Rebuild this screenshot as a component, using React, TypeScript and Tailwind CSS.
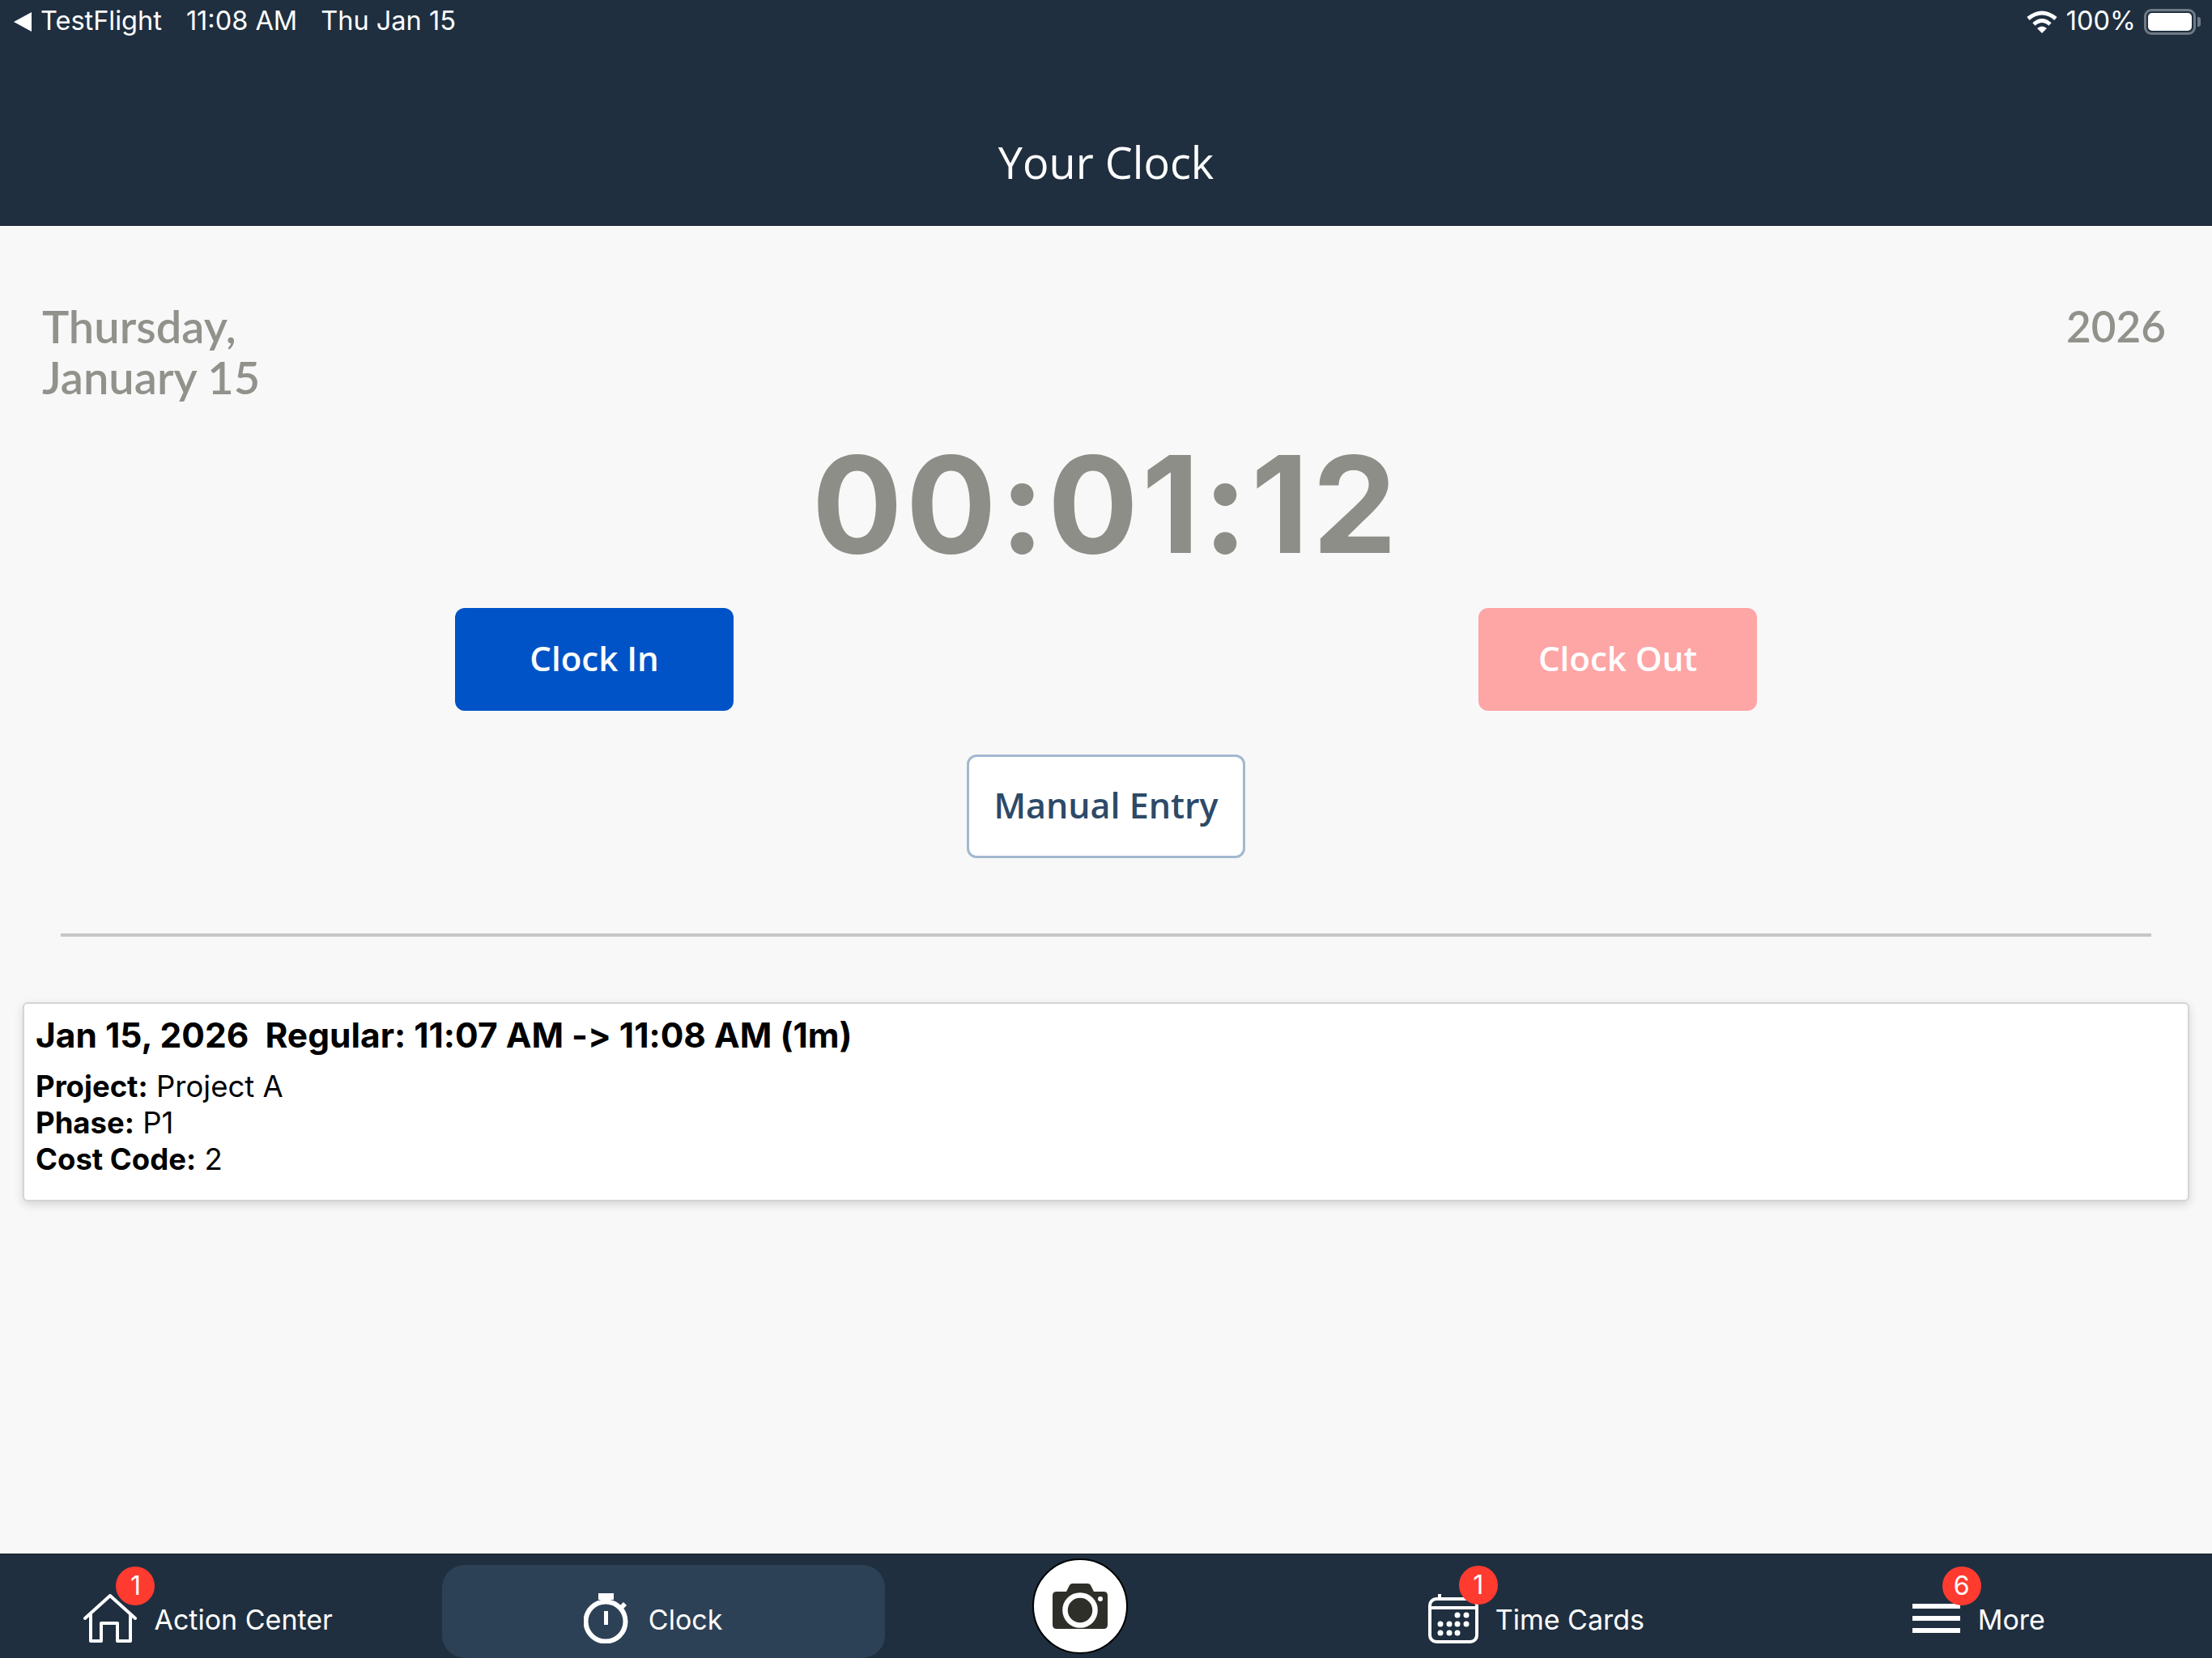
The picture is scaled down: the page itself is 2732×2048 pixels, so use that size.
function Badge({ n, pos }: { n: string; pos: string }) {
  return (
    <span className={`absolute ${pos} flex h-[48px] w-[48px] items-center justify-center rounded-full bg-[#ff3b30] font-['Inter',sans-serif] text-[32px] leading-none text-white`}>
      {n}
    </span>
  );
}

function HomeIcon() {
  return (
    <svg width="66" height="60" viewBox="0 0 66 60" fill="none" stroke="white" strokeWidth="4" strokeLinejoin="round" strokeLinecap="round">
      <path d="M2 30 L33 2 L64 30 M9 25 V58 H22 V36 H42 V58 H58 V25" />
    </svg>
  );
}

function WatchIcon() {
  return (
    <svg width="56" height="62" viewBox="0 0 56 62" fill="white">
      <rect x="18" y="0" width="19" height="8" />
      <circle cx="27" cy="35" r="24.5" fill="none" stroke="white" strokeWidth="6" />
      <rect x="25" y="22" width="5" height="17" />
      <path d="M44 16 L49 11 L53 15 L48 20 Z" />
    </svg>
  );
}

function CalendarIcon() {
  const dots: [number, number][] = [
    [36, 27], [47, 27],
    [15, 38], [26, 38], [36, 38], [47, 38],
    [15, 49], [26, 49], [36, 49],
  ];
  return (
    <svg width="62" height="62" viewBox="0 0 62 62" fill="none" stroke="white" strokeWidth="4">
      <rect x="2" y="7" width="58" height="53" rx="8" />
      <path d="M2 18 H60 M14 1 V6" />
      {dots.map(([x, y]) => (
        <circle key={`${x}-${y}`} cx={x} cy={y} r="3.5" fill="white" stroke="none" />
      ))}
    </svg>
  );
}

function MenuIcon() {
  return (
    <svg width="59" height="40" viewBox="0 0 59 40" fill="white">
      <rect x="0" y="2" width="59" height="6" />
      <rect x="0" y="17" width="59" height="6" />
      <rect x="0" y="32" width="59" height="6" />
    </svg>
  );
}

function CameraIcon() {
  return (
    <svg width="70" height="56" viewBox="0 0 70 56" fill="#2f2f2a">
      <path d="M6 10 H18 L22 2 Q23 0 26 0 H44 Q47 0 48 2 L52 10 H64 Q69 10 69 15 V51 Q69 56 64 56 H6 Q1 56 1 51 V15 Q1 10 6 10 Z" />
      <circle cx="35" cy="33" r="18.5" fill="none" stroke="white" strokeWidth="6.5" />
      <circle cx="60" cy="19" r="3" fill="white" />
    </svg>
  );
}

function Tab({ icon, label, badge, badgePos, active, spacing }: { icon: React.ReactNode; label: string; badge?: string; badgePos?: string; active?: boolean; spacing: string }) {
  return (
    <div className={`mt-[13px] flex items-center justify-center ${spacing} pt-[17px] ${active ? "rounded-[28px] bg-[#2d4156]" : ""}`}>
      <div className="relative flex items-center">
        {icon}
        {badge && badgePos && <Badge n={badge} pos={badgePos} />}
      </div>
      <span className="mt-[4px] font-['Inter',sans-serif] text-[34px] leading-none text-white">{label}</span>
    </div>
  );
}

export default function App() {
  return (
    <div className="flex h-[2048px] w-[2732px] flex-col overflow-hidden bg-[#f8f8f8]">
      <header className="flex h-[279px] shrink-0 flex-col border-b border-b-[#14202c] bg-[#1f2f3f] text-white">
        <div className="flex h-[53px] items-center justify-between pl-[17px] pr-[14px] font-['Inter',sans-serif] text-[32.5px] leading-none">
          <div className="flex items-center">
            <svg width="22" height="24" viewBox="0 0 22 24" fill="white" className="mr-[11px]">
              <path d="M22 0 V24 L0 12 Z" />
            </svg>
            <span className="mr-[30px]">TestFlight</span>
            <span className="mr-[29px]">11:08 AM</span>
            <span>Thu Jan 15</span>
          </div>
          <div className="flex items-center">
            <svg width="38" height="28" viewBox="0 0 38 28" fill="none" stroke="white" strokeWidth="5" className="mr-[11px]">
              <path d="M2 10 Q19 -4 36 10" />
              <path d="M9 17 Q19 8 29 17" />
              <path d="M19 28 L13 22 Q19 17 25 22 Z" fill="white" stroke="none" />
            </svg>
            <span className="mr-[10px]">100%</span>
            <div className="flex items-center">
              <div className="h-[32px] w-[64px] rounded-[9px] border-[3px] border-[#6f7a86] p-[2px]">
                <div className="h-full w-full rounded-[5px] bg-white" />
              </div>
              <div className="ml-[2px] h-[12px] w-[4px] rounded-r-[3px] bg-[#6f7a86]" />
            </div>
          </div>
        </div>
        <h1 className="mt-[121px] text-center font-['Open_Sans',sans-serif] text-[54px] font-medium leading-[52px] text-white">Your Clock</h1>
      </header>

      <main className="flex min-h-0 flex-1 flex-col">
        <div className="flex items-start justify-between pl-[52px] pr-[57px] pt-[92px] font-['Lato',sans-serif] text-[56px] font-semibold leading-[63px] text-[#92928c]">
          <div>
            <div>Thursday,</div>
            <div>January 15</div>
          </div>
          <div className="text-[53px]">2026</div>
        </div>
        <div className="mt-[26px] text-center font-['Inter',sans-serif] text-[166px] font-bold leading-[200px] tracking-[4px] text-[#8e8e88]">00:01:12</div>
        <div className="mt-[28px] flex justify-center gap-[920px]">
          <button className="h-[127px] w-[344px] rounded-[12px] bg-[#0053c7] pb-[5px] font-['Open_Sans',sans-serif] text-[42px] font-semibold text-white">Clock In</button>
          <button className="h-[127px] w-[344px] rounded-[12px] bg-[#fea5a5] pb-[5px] font-['Open_Sans',sans-serif] text-[42px] font-semibold text-white">Clock Out</button>
        </div>
        <div className="mt-[54px] flex justify-center">
          <button className="h-[128px] w-[344px] rounded-[12px] border-[3px] border-[#a3b8d0] bg-white pb-[2px] font-['Open_Sans',sans-serif] text-[43px] font-semibold text-[#2d4a68]">Manual Entry</button>
        </div>
        <div className="mx-[75px] mt-[93px] h-[4px] bg-[#c6c6c6]" />
        <div className="mx-[28px] mt-[81px] h-[246px] rounded-[6px] border-[2px] border-[#d4d4d4] bg-white px-[14px] pt-[14px] font-['Inter',sans-serif] text-black shadow-[0_4px_12px_rgba(0,0,0,0.14)]">
          <div className="whitespace-pre text-[42.5px] font-bold leading-[50px] [font-feature-settings:'calt'_0]">Jan 15, 2026  Regular: 11:07 AM -&gt; 11:08 AM (1m)</div>
          <div className="mt-[16px] text-[36.5px] leading-[45px]">
            <div><b>Project:</b> Project A</div>
            <div><b>Phase:</b> P1</div>
            <div><b>Cost Code:</b> 2</div>
          </div>
        </div>
      </main>

      <nav className="grid h-[129px] shrink-0 grid-cols-5 border-t border-t-[#10181f] bg-[#1f2f3f]">
        <Tab icon={<HomeIcon />} label="Action Center" badge="1" badgePos="left-[40px] top-[-34px]" spacing="gap-[21px] pr-[32px]" />
        <Tab icon={<WatchIcon />} label="Clock" active spacing="gap-[24px] pr-[26px]" />
        <div className="flex items-center justify-center pr-[64px]">
          <div className="flex h-[118px] w-[118px] items-center justify-center rounded-full border-[2px] border-black bg-white">
            <CameraIcon />
          </div>
        </div>
        <Tab icon={<CalendarIcon />} label="Time Cards" badge="1" badgePos="left-[38px] top-[-34px]" spacing="gap-[21px] pr-[30px]" />
        <Tab icon={<MenuIcon />} label="More" badge="6" badgePos="left-[37px] top-[-44px]" spacing="gap-[22px] pr-[30px]" />
      </nav>
    </div>
  );
}
